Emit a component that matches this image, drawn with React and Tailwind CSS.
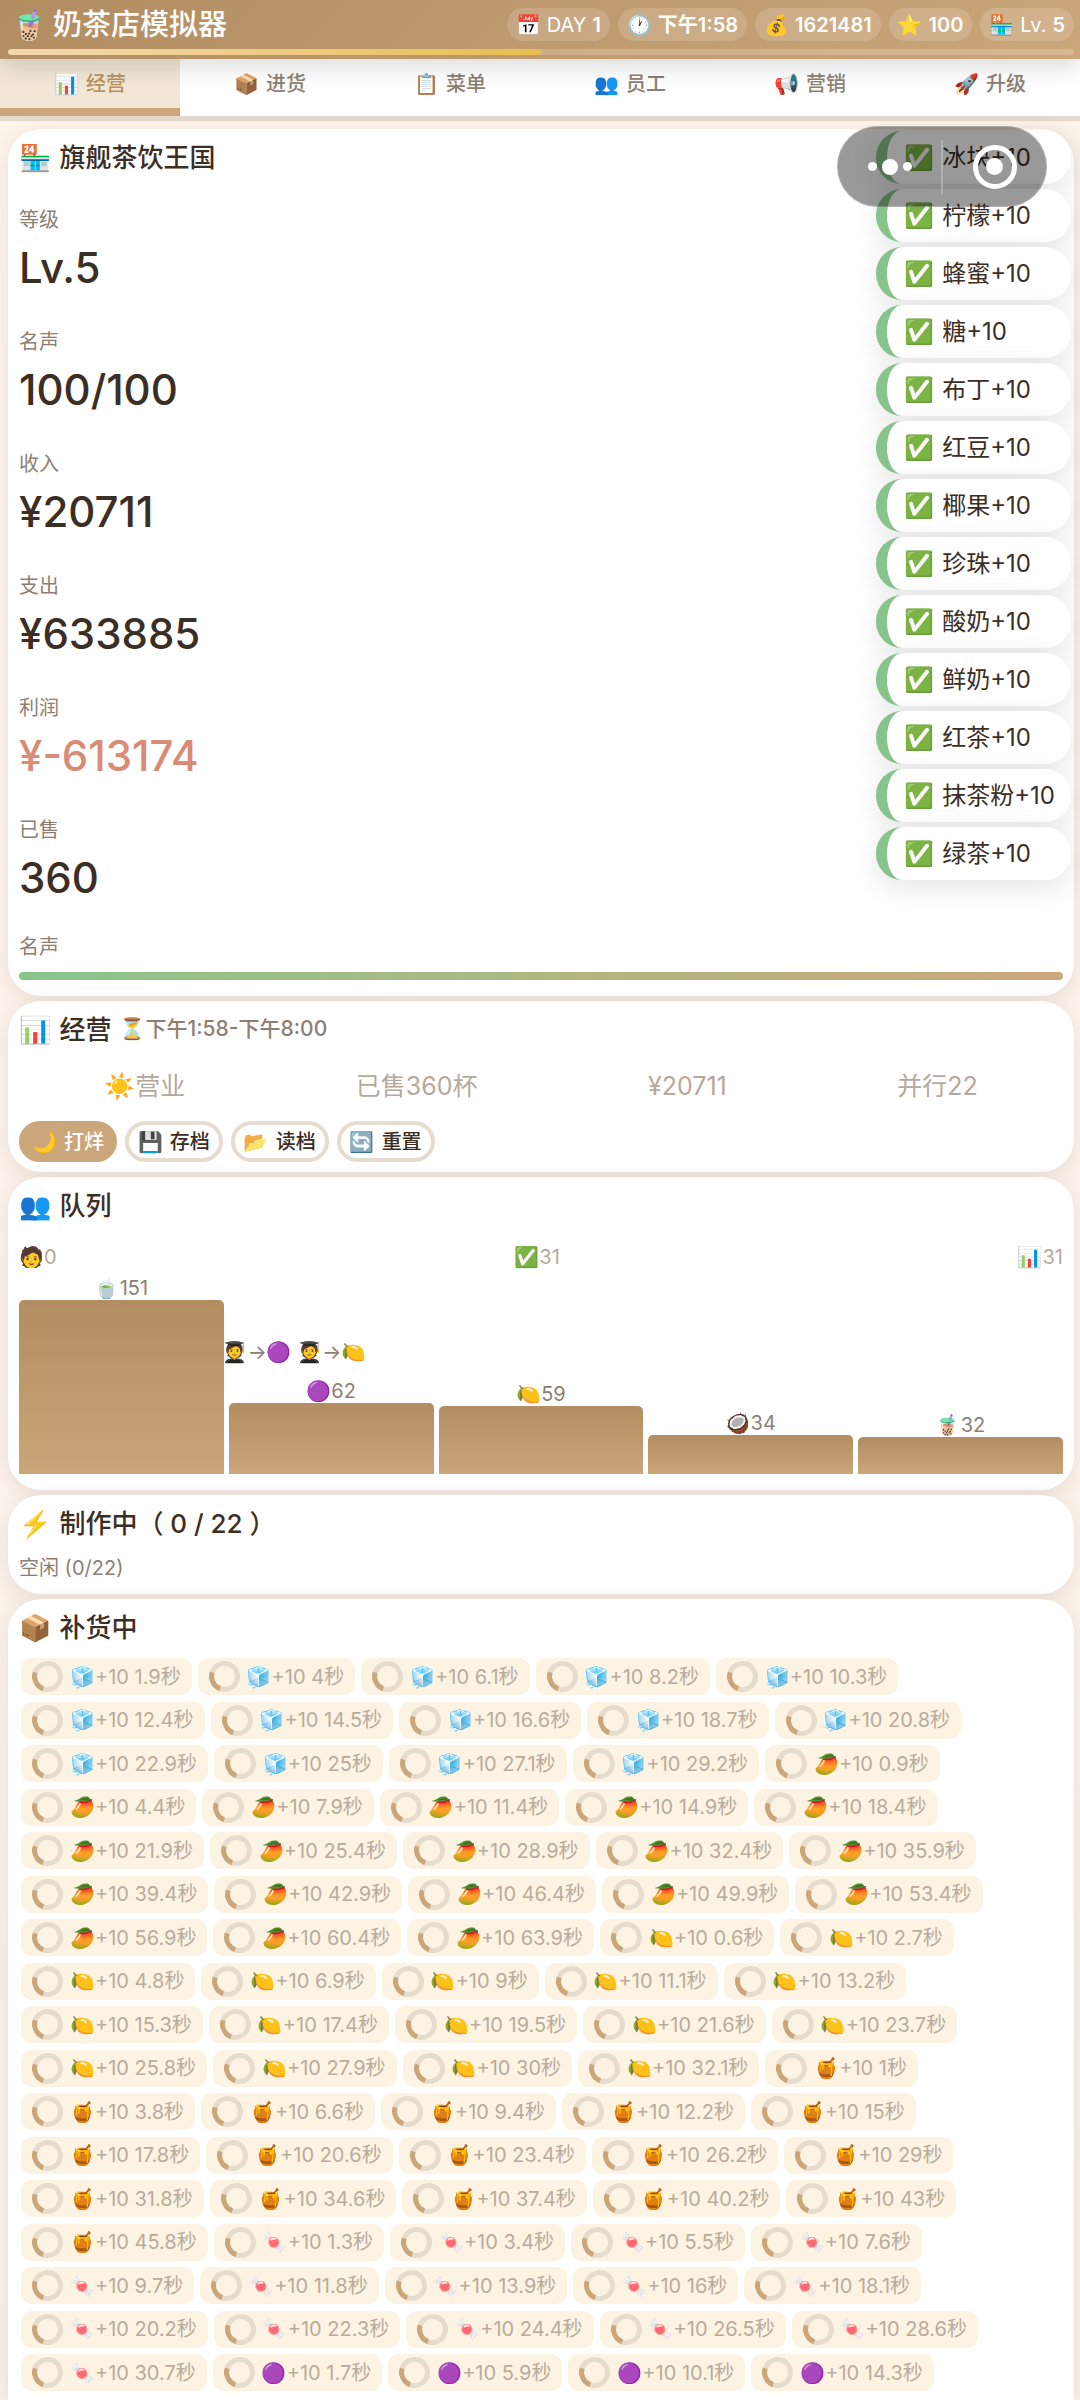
import React, { useState } from "react";

const headerStats = [
  { icon: "📅", label: "DAY", value: "1" },
  { icon: "🕐", value: "下午1:58" },
  { icon: "💰", value: "1621481" },
  { icon: "⭐", value: "100" },
  { icon: "🏪", label: "Lv.", value: "5" },
];

const tabs = [
  { icon: "📊", name: "经营" },
  { icon: "📦", name: "进货" },
  { icon: "📋", name: "菜单" },
  { icon: "👥", name: "员工" },
  { icon: "📢", name: "营销" },
  { icon: "🚀", name: "升级" },
];

const shopStats = [
  { label: "等级", value: "Lv.5" },
  { label: "名声", value: "100/100" },
  { label: "收入", value: "¥20711" },
  { label: "支出", value: "¥633885" },
  { label: "利润", value: "¥-613174", negative: true },
  { label: "已售", value: "360" },
];

const actions = [
  { icon: "🌙", name: "打烊", primary: true },
  { icon: "💾", name: "存档" },
  { icon: "📂", name: "读档" },
  { icon: "🔄", name: "重置" },
];

const sales = [
  { icon: "🍵", count: 151 },
  { icon: "🟣", count: 62 },
  { icon: "🍋", count: 59 },
  { icon: "🥥", count: 34 },
  { icon: "🧋", count: 32 },
];

const toasts = [
  "冰块",
  "柠檬",
  "蜂蜜",
  "糖",
  "布丁",
  "红豆",
  "椰果",
  "珍珠",
  "酸奶",
  "鲜奶",
  "红茶",
  "抹茶粉",
  "绿茶",
];

// every batch of an ingredient arrives `step` seconds after the previous one
const restockPlans = [
  { icon: "🧊", first: 1.9, step: 2.1, batches: 14 },
  { icon: "🥭", first: 0.9, step: 3.5, batches: 19 },
  { icon: "🍋", first: 0.6, step: 2.1, batches: 16 },
  { icon: "🍯", first: 1, step: 2.8, batches: 17 },
  { icon: "🍬", first: 1.3, step: 2.1, batches: 15 },
  { icon: "🟣", first: 1.7, step: 4.2, batches: 4 },
];

const restocks = restockPlans.flatMap(({ icon, first, step, batches }) =>
  Array.from({ length: batches }, (_, i) => ({
    icon,
    seconds: Number((first + i * step).toFixed(1)),
  }))
);

const CHART_HEIGHT = 174;
const maxSales = Math.max(...sales.map((item) => item.count));

const Card = ({ icon, title, extra, className = "", children }) => (
  <section
    className={`rounded-[33px] bg-white px-[11px] pt-2 shadow-[0_5px_22px_rgba(60,40,20,0.1)] ${className}`}
  >
    <h2 className="flex h-10 items-center gap-2 text-[26px] font-medium text-[#3b2e24]">
      <span>{icon}</span>
      <span className="whitespace-pre">{title}</span>
      {extra}
    </h2>
    {children}
  </section>
);

const Header = () => (
  <header className="relative z-10 h-[59px] bg-linear-135 from-[#b38d62] to-[#cca67b] pt-2 pr-[6px] pl-2 text-white shadow-[0_8px_24px_rgba(0,0,0,0.14)]">
    <div className="flex h-[33px] items-center justify-between pl-[3px]">
      <h1 className="flex items-center gap-[6px] text-[29px] font-medium">
        <span>🧋</span>
        奶茶店模拟器
      </h1>
      <ul className="flex gap-2 text-[20px]">
        {headerStats.map((stat) => (
          <li
            key={stat.icon}
            className="flex h-[33px] items-center gap-[6px] rounded-full bg-white/15 px-[9px]"
          >
            <span>{stat.icon}</span>
            {stat.label && <span>{stat.label}</span>}
            <span className="font-semibold">{stat.value}</span>
          </li>
        ))}
      </ul>
    </div>
    <div className="mt-2 h-[6px] overflow-hidden rounded-full bg-white/20">
      <div className="h-full w-1/2 rounded-full bg-linear-to-r from-[#f5d9ae] to-[#e8be4e]" />
    </div>
  </header>
);

const TabBar = ({ active, onChange }) => (
  <nav className="grid grid-cols-6 border-b-[5px] border-[#e3d9ce] bg-white">
    {tabs.map((tab) => (
      <button
        key={tab.name}
        type="button"
        onClick={() => onChange(tab.name)}
        className={`flex h-[57px] items-center justify-center gap-[7px] border-b-8 text-[20px] font-medium ${
          active === tab.name
            ? "border-[#cca67b] bg-[#f2e7d7] text-[#b8925f]"
            : "border-transparent text-[#8b8073]"
        }`}
      >
        <span>{tab.icon}</span>
        {tab.name}
      </button>
    ))}
  </nav>
);

const ShopCard = () => (
  <Card icon="🏪" title="旗舰茶饮王国" className="pb-4">
    <dl className="mt-[27px] flex flex-col gap-[26px]">
      {shopStats.map((stat) => (
        <div key={stat.label}>
          <dt className="text-[20px] leading-8 text-[#8b8073]">{stat.label}</dt>
          <dd
            className={`text-[42px] leading-[64px] font-medium ${
              stat.negative ? "text-[#d98b74]" : "text-[#3b2e24]"
            }`}
          >
            {stat.value}
          </dd>
        </div>
      ))}
    </dl>
    <p className="mt-[21px] text-[20px] leading-8 text-[#8b8073]">名声</p>
    <div className="mt-[9px] h-2 rounded-full bg-linear-to-r from-[#87c68a] to-[#cca67b]" />
  </Card>
);

const BusinessCard = () => (
  <Card
    icon="📊"
    title="经营"
    className="pb-[10px]"
    extra={<span className="text-[21px] text-[#8b8073]">⏳下午1:58-下午8:00</span>}
  >
    <div className="mt-4 flex h-11 items-center justify-around text-[25px] text-[#b5a99c]">
      <span>☀️营业</span>
      <span>已售360杯</span>
      <span>¥20711</span>
      <span>并行22</span>
    </div>
    <div className="mt-3 flex gap-2">
      {actions.map((action) => (
        <button
          key={action.name}
          type="button"
          className={`flex h-[41px] items-center gap-[7px] rounded-full border-4 px-[9px] text-[20px] font-medium ${
            action.primary
              ? "border-[#cca67b] bg-[#cca67b] text-white"
              : "border-[#e5dbcf] bg-white text-[#3b2e24]"
          }`}
        >
          <span>{action.icon}</span>
          {action.name}
        </button>
      ))}
    </div>
  </Card>
);

const QueueCard = () => (
  <Card icon="👥" title="队列" className="pb-4">
    <div className="mt-4 flex h-8 items-center justify-between text-[20px] text-[#b5a99c]">
      <span>🧑0</span>
      <span>✅31</span>
      <span>📊31</span>
    </div>
    <div className="relative mt-[3px] grid grid-cols-5 items-end gap-[5px] text-[20px] leading-6 text-[#8b8073]">
      {sales.map((item) => (
        <div key={item.icon} className="text-center">
          <p>
            {item.icon}
            {item.count}
          </p>
          <div
            className="rounded-t-[5px] bg-linear-to-b from-[#b38d62] to-[#cca67b]"
            style={{ height: Math.round((item.count / maxSales) * CHART_HEIGHT) }}
          />
        </div>
      ))}
      <p className="absolute top-[64px] left-[calc(20%-5px)]">🧑‍🎓→🟣 🧑‍🎓→🍋</p>
    </div>
  </Card>
);

const BrewingCard = () => (
  <Card icon="⚡" title="制作中（ 0 / 22 ）" className="pb-[10px]">
    <p className="mt-[9px] text-[20px] leading-8 text-[#8b8073]">空闲 (0/22)</p>
  </Card>
);

const RestockCard = () => (
  <Card
    icon="📦"
    title="补货中"
    className="flex flex-1 flex-col rounded-b-none pb-[9px]"
  >
    <ul className="mt-[11px] flex flex-1 flex-wrap content-between gap-[6px] px-[2px] text-[20px] text-[#b8ac9d]">
      {restocks.map((item, i) => (
        <li
          key={i}
          className="flex h-[37px] items-center gap-[7px] rounded-[11px] bg-[#fcf3e3] px-[11px]"
        >
          <span className="size-[31px] -rotate-26 rounded-full border-[5px] border-[#e5dccd] border-l-[#cca67b]" />
          <span>
            {item.icon}+10 {item.seconds}秒
          </span>
        </li>
      ))}
    </ul>
  </Card>
);

const Toasts = () => (
  <ul className="absolute top-[131px] right-[9px] z-20 flex flex-col gap-[5px] text-[24px] text-[#3b2e24]">
    {toasts.map((name) => (
      <li
        key={name}
        className="flex h-[53px] items-center gap-2 rounded-[26px] border-l-[11px] border-[#87c38b] bg-white pr-4 pl-[17px] shadow-[0_8px_30px_rgba(0,0,0,0.1)]"
      >
        <span>✅</span>
        {name}+10
      </li>
    ))}
  </ul>
);

const MiniProgramCapsule = () => (
  <div className="absolute top-[126px] right-[33px] z-30 flex h-[81px] w-[210px] items-center rounded-full border border-white/20 bg-black/40">
    <button type="button" aria-label="更多" className="flex flex-1 items-center justify-center gap-[5px]">
      <span className="size-[9px] rounded-full bg-white" />
      <span className="size-4 rounded-full bg-white" />
      <span className="size-[9px] rounded-full bg-white" />
    </button>
    <span className="h-[54px] w-[2px] bg-white/25" />
    <button type="button" aria-label="关闭" className="flex flex-1 items-center justify-center">
      <span className="flex size-11 items-center justify-center rounded-full border-[5px] border-white">
        <span className="size-[17px] rounded-full bg-white" />
      </span>
    </button>
  </div>
);

const App = () => {
  const [activeTab, setActiveTab] = useState("经营");

  return (
    <div className="relative flex min-h-screen flex-col bg-linear-to-b from-[#fdf5ec] via-[#fdf3ec] to-[#f8f2e8] font-['Inter','Noto_Sans_CJK_SC','Noto_Color_Emoji',sans-serif]">
      <Header />
      <TabBar active={activeTab} onChange={setActiveTab} />
      <main className="flex flex-1 flex-col gap-[5px] pt-2 pr-[6px] pl-2">
        <ShopCard />
        <BusinessCard />
        <QueueCard />
        <BrewingCard />
        <RestockCard />
      </main>
      <Toasts />
      <MiniProgramCapsule />
    </div>
  );
};

export default App;
